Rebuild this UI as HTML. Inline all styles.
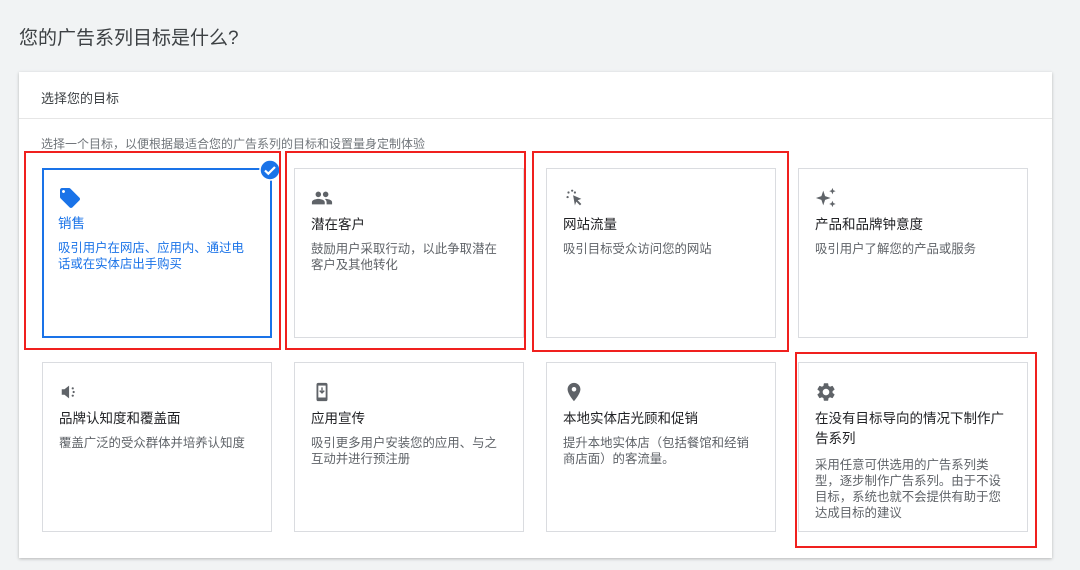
<!DOCTYPE html>
<html><head><meta charset="utf-8"><style>
*{margin:0;padding:0;box-sizing:border-box}
body{width:1080px;height:570px;background:#f1f3f4;font-family:"Liberation Sans","Noto Sans CJK SC",sans-serif;position:relative;overflow:hidden;color:#3c4043}
.abs{position:absolute}
h1{position:absolute;left:19px;top:23px;font-size:19px;font-weight:normal;color:#3c4043}
.panel{position:absolute;left:19px;top:72px;width:1033px;height:486px;background:#fff;box-shadow:0 1px 3px rgba(0,0,0,.25)}
.hdr{position:absolute;left:22px;top:16px;font-size:13px;color:#3c4043}
.div{position:absolute;left:0;top:46px;width:100%;height:1px;background:#e6e6e6}
.sub{position:absolute;left:22px;top:63px;font-size:12px;color:#70757a}
.c{position:absolute;width:230px;height:170px;border:1px solid #dadce0;background:#fff}
.c svg{position:absolute;left:16px;top:18px}
.t{position:absolute;left:16px;top:46px;width:190px;font-size:13.5px;line-height:20px;color:#202124}
.d{font-size:12.4px;line-height:16px;color:#5f6368;margin-top:6px}
.sel{border:2px solid #1a73e8}
.sel .t,.sel .d{color:#1a73e8}
.red{position:absolute;border:2px solid #f0201e}
</style></head><body>
<h1>您的广告系列目标是什么?</h1>
<div class="panel">
<div class="hdr">选择您的目标</div><div class="div"></div>
<div class="sub">选择一个目标，以便根据最适合您的广告系列的目标和设置量身定制体验</div>
</div>

<div class="c sel" style="left:42px;top:168px">
<svg width="24" height="24" viewBox="0 0 24 24" style="left:14px;top:16px"><path fill="#1a73e8" d="M21.4 11.6l-9-9C12 2.2 11.5 2 11 2H4c-1.1 0-2 .9-2 2v7c0 .55.22 1.05.59 1.42l9 9c.36.36.86.58 1.41.58s1.05-.22 1.41-.59l7-7c.37-.36.59-.86.59-1.41s-.23-1.06-.6-1.4zM5.5 7C4.67 7 4 6.33 4 5.5S4.67 4 5.5 4 7 4.67 7 5.5 6.33 7 5.5 7z"/></svg>
<div class="t" style="left:14px;top:44px">销售<div class="d">吸引用户在网店、应用内、通过电话或在实体店出手购买</div></div>
</div>
<svg class="abs" style="left:259px;top:159px" width="22" height="22" viewBox="0 0 22 22"><circle cx="11" cy="11" r="10" fill="#1a73e8" stroke="#fff" stroke-width="1.5"/><path d="M6 11.5l3.3 3.2L16 8" fill="none" stroke="#fff" stroke-width="2.2"/></svg>

<div class="c" style="left:294px;top:168px">
<svg width="22" height="22" viewBox="0 0 24 24"><path fill="#5f6368" d="M16 11c1.66 0 2.99-1.34 2.99-3S17.66 5 16 5s-3 1.34-3 3 1.34 3 3 3zm-8 0c1.66 0 2.99-1.34 2.99-3S9.66 5 8 5 5 6.34 5 8s1.34 3 3 3zm0 2c-2.33 0-7 1.17-7 3.5V19h14v-2.5c0-2.330-4.67-3.5-7-3.5zm8 0c-.29 0-.62.02-.97.05 1.16.84 1.970 1.97 1.97 3.45V19h6v-2.5c0-2.33-4.67-3.5-7-3.5z"/></svg>
<div class="t">潜在客户<div class="d">鼓励用户采取行动，以此争取潜在客户及其他转化</div></div>
</div>

<div class="c" style="left:546px;top:168px">
<svg width="22" height="22" viewBox="0 0 24 24"><path fill="#5f6368" d="M11 9l9 4-4 1.5 4 4-1.5 1.5-4-4L13 20z"/><circle cx="5" cy="11" r="1.2" fill="#5f6368"/><circle cx="10" cy="4" r="1.2" fill="#5f6368"/><circle cx="6" cy="6" r="1.2" fill="#5f6368"/><circle cx="13" cy="6" r="1.2" fill="#5f6368"/></svg>
<div class="t">网站流量<div class="d">吸引目标受众访问您的网站</div></div>
</div>

<div class="c" style="left:798px;top:168px">
<svg width="22" height="22" viewBox="0 0 24 24"><path fill="#5f6368" d="M9 4l2 6 6 2-6 2-2 6-2-6-6-2 6-2zM19 1l1 2.5 2.5 1-2.5 1L19 8l-1-2.5-2.5-1 2.5-1zM19 15l1 2.5 2.5 1-2.5 1L19 22l-1-2.5-2.5-1 2.5-1z"/></svg>
<div class="t">产品和品牌钟意度<div class="d">吸引用户了解您的产品或服务</div></div>
</div>

<div class="c" style="left:42px;top:362px">
<svg width="22" height="22" viewBox="0 0 24 24"><path fill="#5f6368" d="M3 9v6h3l5 4V5L6 9z"/><circle cx="15" cy="8" r="1.2" fill="#5f6368"/><circle cx="16" cy="12" r="1.2" fill="#5f6368"/><circle cx="15" cy="16" r="1.2" fill="#5f6368"/></svg>
<div class="t">品牌认知度和覆盖面<div class="d">覆盖广泛的受众群体并培养认知度</div></div>
</div>

<div class="c" style="left:294px;top:362px">
<svg width="22" height="22" viewBox="0 0 24 24"><rect x="6" y="2" width="12" height="20" rx="2" fill="#5f6368"/><rect x="8" y="5" width="8" height="13" fill="#fff"/><path d="M12 7v6m-2.5-2.5L12 13l2.5-2.5" stroke="#5f6368" stroke-width="1.5" fill="none"/></svg>
<div class="t">应用宣传<div class="d">吸引更多用户安装您的应用、与之互动并进行预注册</div></div>
</div>

<div class="c" style="left:546px;top:362px">
<svg width="22" height="22" viewBox="0 0 24 24"><path fill="#5f6368" d="M12 2C8.13 2 5 5.13 5 9c0 5.25 7 13 7 13s7-7.750 7-13c0-3.87-3.13-7-7-7zm0 9.5a2.5 2.5 0 010-5 2.5 2.5 0 010 5z"/></svg>
<div class="t">本地实体店光顾和促销<div class="d">提升本地实体店（包括餐馆和经销商店面）的客流量。</div></div>
</div>

<div class="c" style="left:798px;top:362px">
<svg width="22" height="22" viewBox="0 0 24 24"><path fill="#5f6368" d="M19.14 12.94c.04-.3.06-.61.06-.94 0-.32-.02-.64-.07-.94l2.03-1.58a.49.49 0 00.12-.61l-1.92-3.32a.488.488 0 00-.59-.22l-2.39.96c-.5-.38-1.03-.7-1.62-.94l-.36-2.54a.484.484 0 00-.48-.41h-3.84c-.24 0-.43.17-.47.41l-.36 2.54c-.59.24-1.13.57-1.62.94l-2.39-.96c-.22-.08-.47 0-.59.22L2.74 8.87c-.12.21-.08.47.12.61l2.03 1.58c-.05.3-.09.63-.09.94s.02.64.07.94l-2.03 1.58a.49.49 0 00-.12.61l1.92 3.32c.12.22.37.29.59.22l2.39-.96c.5.38 1.03.7 1.62.94l.36 2.54c.05.24.24.41.48.41h3.840c.24 0 .44-.17.47-.41l.36-2.54c.59-.24 1.13-.56 1.62-.94l2.39.96c.22.08.47 0 .59-.22l1.92-3.32c.12-.22.07-.47-.12-.61l-2.01-1.58zM12 15.6c-1.98 0-3.6-1.62-3.6-3.6s1.62-3.6 3.6-3.6 3.6 1.62 3.6 3.6-1.62 3.6-3.6 3.6z"/></svg>
<div class="t">在没有目标导向的情况下制作广告系列<div class="d" style="margin-top:8px">采用任意可供选用的广告系列类型，逐步制作广告系列。由于不设目标，系统也就不会提供有助于您达成目标的建议</div></div>
</div>

<div class="red" style="left:24px;top:151px;width:257px;height:199px"></div>
<div class="red" style="left:285px;top:151px;width:241px;height:199px"></div>
<div class="red" style="left:532px;top:151px;width:257px;height:201px"></div>
<div class="red" style="left:795px;top:352px;width:242px;height:196px"></div>
</body></html>
